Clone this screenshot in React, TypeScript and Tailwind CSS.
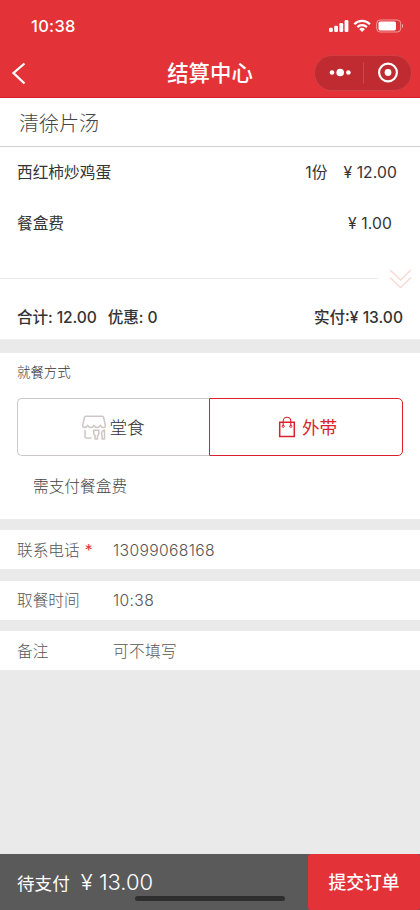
import type { ReactNode } from "react";

const dishes = [
  { name: "西红柿炒鸡蛋", count: "1份", price: "¥ 12.00", pad: "pr-[23px]" },
  { name: "餐盒费", count: "", price: "¥ 1.00", pad: "pr-7" },
];

function StatusIcons() {
  return (
    <svg width="76" height="14" viewBox="0 0 76 14" fill="#fff">
      {/* signal */}
      <rect x="0" y="8.8" width="3.8" height="4.2" rx="1.2" />
      <rect x="5.2" y="6.8" width="3.8" height="6.2" rx="1.2" />
      <rect x="10.4" y="4" width="3.8" height="9" rx="1.2" />
      <rect x="15.6" y="1" width="3.8" height="12" rx="1.2" />
      {/* wifi */}
      <g fill="none" stroke="#fff" strokeWidth="2.2">
        <path d="M25.3 5.2a11 11 0 0 1 15.600 0" />
        <path d="M28.3 8.1a7 7 0 0 1 9.600 0" />
      </g>
      <path d="M30.3 10.2a4 4 0 0 1 5.600 0L33.1 13z" />
      {/* battery */}
      <rect x="47.7" y="1" width="24" height="12" rx="3.4" fill="none" stroke="#fff" strokeOpacity="0.5" />
      <rect x="49.5" y="2.6" width="17.5" height="8.8" rx="1.6" />
      <path d="M73 5v4c1.600-.6 1.600-3.400 0-4z" opacity="0.6" />
    </svg>
  );
}

function ShopIcon() {
  return (
    <svg width="24" height="25" viewBox="0 0 24 25" fill="none" stroke="#cfc6c7" strokeWidth="1.5" strokeLinecap="round" strokeLinejoin="round">
      {/* awning */}
      <path d="M4 1.2h16c.9 0 1.4.5 1.6 1.3l1.7 7.700c.1 1.700-.7 2.400-1.800 2.400-1.500 0-2.700-1-3.200-2.300-.6 1.500-1.500 2.300-3.100 2.300s-2.600-.8-3.200-2.300c-.6 1.500-1.600 2.300-3.200 2.300s-2.500-.8-3.100-2.300c-.5 1.300-1.700 2.300-3.200 2.300-1.100 0-1.900-.7-1.800-2.400l1.700-7.700C2.600 1.700 3.100 1.200 4 1.200z" />
      <path d="M3 15.500v6c0 .9.600 1.500 1.500 1.500H9" />
      {/* fork and knife */}
      <path d="M11.700 15.200h5.100v3.200c0 1.100-.7 1.800-1.300 2v3.600h-2.400v-3.600c-.7-.2-1.400-.9-1.400-2z" />
      <path d="M22.500 24h-2.400v-3.500c-1-1-.9-5 2.400-5.600z" />
    </svg>
  );
}

function BagIcon() {
  return (
    <svg width="18" height="22" viewBox="0 0 18 22" fill="none" stroke="#d9232c">
      <path d="M1.700 6.200h14.600v14.300H1.700z" strokeWidth="1.5" />
      <path d="M5.200 10V5c0-5 7.600-5 7.600 0v5" strokeWidth="1.1" />
      <circle cx="5.200" cy="10.300" r="1.1" />
      <circle cx="12.800" cy="10.300" r="1.1" />
    </svg>
  );
}

function Field({ label, required, children }: { label: string; required?: boolean; children: ReactNode }) {
  return (
    <div className="flex h-[39px] items-center bg-white pt-0.5 pl-[17px] text-[15.7px] font-light text-[#555]">
      <div className="flex w-24">
        {label}
        {required && <span className="ml-[5px] font-normal text-[#e3323a]">*</span>}
      </div>
      <div className="tracking-[0.35px]">{children}</div>
    </div>
  );
}

export default function App() {
  return (
    <div className="flex h-[910px] w-[420px] flex-col overflow-hidden bg-[#eaeaea] font-['Inter','Noto_Sans_CJK_SC',sans-serif] leading-none whitespace-nowrap">
      <header className="h-[98px] border-b border-[#d81e2a] bg-[#e33338] text-white">
        <div className="flex h-[52px] items-center justify-between pr-[15px] pl-[31px]">
          <span className="text-[16.5px] font-medium tracking-[0.3px]">10:38</span>
          <StatusIcons />
        </div>
        <div className="grid h-[41px] grid-cols-[105px_1fr_105px] items-center">
          <svg className="ml-[11px]" width="16" height="24" viewBox="0 0 16 24" fill="none" stroke="#fff" strokeWidth="2.3">
            <path d="M13.5 2.500 2.500 12l11 10.500" />
          </svg>
          <h1 className="pt-0.5 text-center text-[21.4px] font-medium">结算中心</h1>
          <div className="-ml-px flex h-9 w-[98px] items-center rounded-full border border-[#d04045] bg-[#bf2b30]">
            <svg width="96" height="34" viewBox="0 0 96 34" fill="#fff">
              <circle cx="17" cy="16.5" r="2.3" />
              <circle cx="25.2" cy="16.5" r="3.8" />
              <circle cx="33.4" cy="16.5" r="2.3" />
              <path d="M48.5 6.500v21" stroke="#d0484c" />
              <circle cx="73" cy="16.5" r="8.9" fill="none" stroke="#fff" strokeWidth="2.2" />
              <circle cx="73" cy="16.5" r="3.4" />
            </svg>
          </div>
        </div>
      </header>

      <div className="flex h-[49px] items-center border-b border-[#d2d2d2] bg-white pt-[3px] pl-[19px] text-[20px] font-light text-[#444]">清徐片汤</div>

      <section className="h-[193px] border-b border-[#f0f0f0] bg-white text-[#333]">
        {dishes.map((dish) => (
          <div key={dish.name} className={`flex h-[50.5px] items-center pt-0.5 pl-[17px] text-[15.7px] ${dish.pad}`}>
            <span className="flex-1">{dish.name}</span>
            <span className="mr-4">{dish.count}</span>
            <span className="tracking-[0.1px]">{dish.price}</span>
          </div>
        ))}
        <div className="flex h-[61px] items-center">
          <div className="h-px w-[378px] bg-[#ececec]" />
          <svg className="ml-[11px]" width="23" height="20" viewBox="0 0 23 20" fill="none" stroke="#f8d9d5" strokeWidth="1.4">
            <path d="M1 1l10.500 10L22 1M1 8.500l10.500 10L22 8.500" />
          </svg>
        </div>
        <div className="flex h-[17px] items-center px-[17px] text-[15.6px] font-medium text-[#333]">
          <span className="tracking-[-0.1px]">合计: 12.00</span>
          <span className="ml-[11px] flex-1 tracking-[-0.1px]">优惠: 0</span>
          <span>实付:¥ 13.00</span>
        </div>
      </section>

      <section className="mt-[13px] h-[166px] bg-white px-[17px] pt-[13px]">
        <h2 className="text-[13.4px] font-light text-[#333]">就餐方式</h2>
        <div className="mt-[19px] flex h-[58px] text-[17.6px]">
          <button className="flex w-[192px] items-center justify-center gap-[3px] rounded-l-[5px] border border-r-0 border-[#ccc8c9] font-light text-[#333]">
            <ShopIcon />
            堂食
          </button>
          <button className="flex flex-1 items-center justify-center gap-[6px] rounded-r-[5px] border border-[#d9232c] pl-[3px] text-[#d9232c]">
            <BagIcon />
            外带
          </button>
        </div>
        <p className="mt-[23px] pl-4 text-[15.7px] font-light text-[#444]">需支付餐盒费</p>
      </section>

      <section className="mt-[11px] flex flex-col gap-[11.5px]">
        <Field label="联系电话" required>13099068168</Field>
        <Field label="取餐时间">10:38</Field>
        <Field label="备注">可不填写</Field>
      </section>

      <footer className="relative mt-auto flex h-14 bg-[#5a5a5a] text-white">
        <div className="flex flex-1 items-center pl-[17px]">
          <span className="pt-[3px] text-[17.6px]">待支付</span>
          <span className="ml-[11px] text-[22px] font-light">¥ 13.00</span>
        </div>
        <button className="w-28 rounded-[3px] bg-[#e33338] pt-0.5 text-[17.8px] font-medium">提交订单</button>
        {/* home indicator */}
        <div className="absolute bottom-[9px] left-[135px] h-[5px] w-[150px] rounded-full bg-[#2e2e2e]" />
      </footer>
    </div>
  );
}
